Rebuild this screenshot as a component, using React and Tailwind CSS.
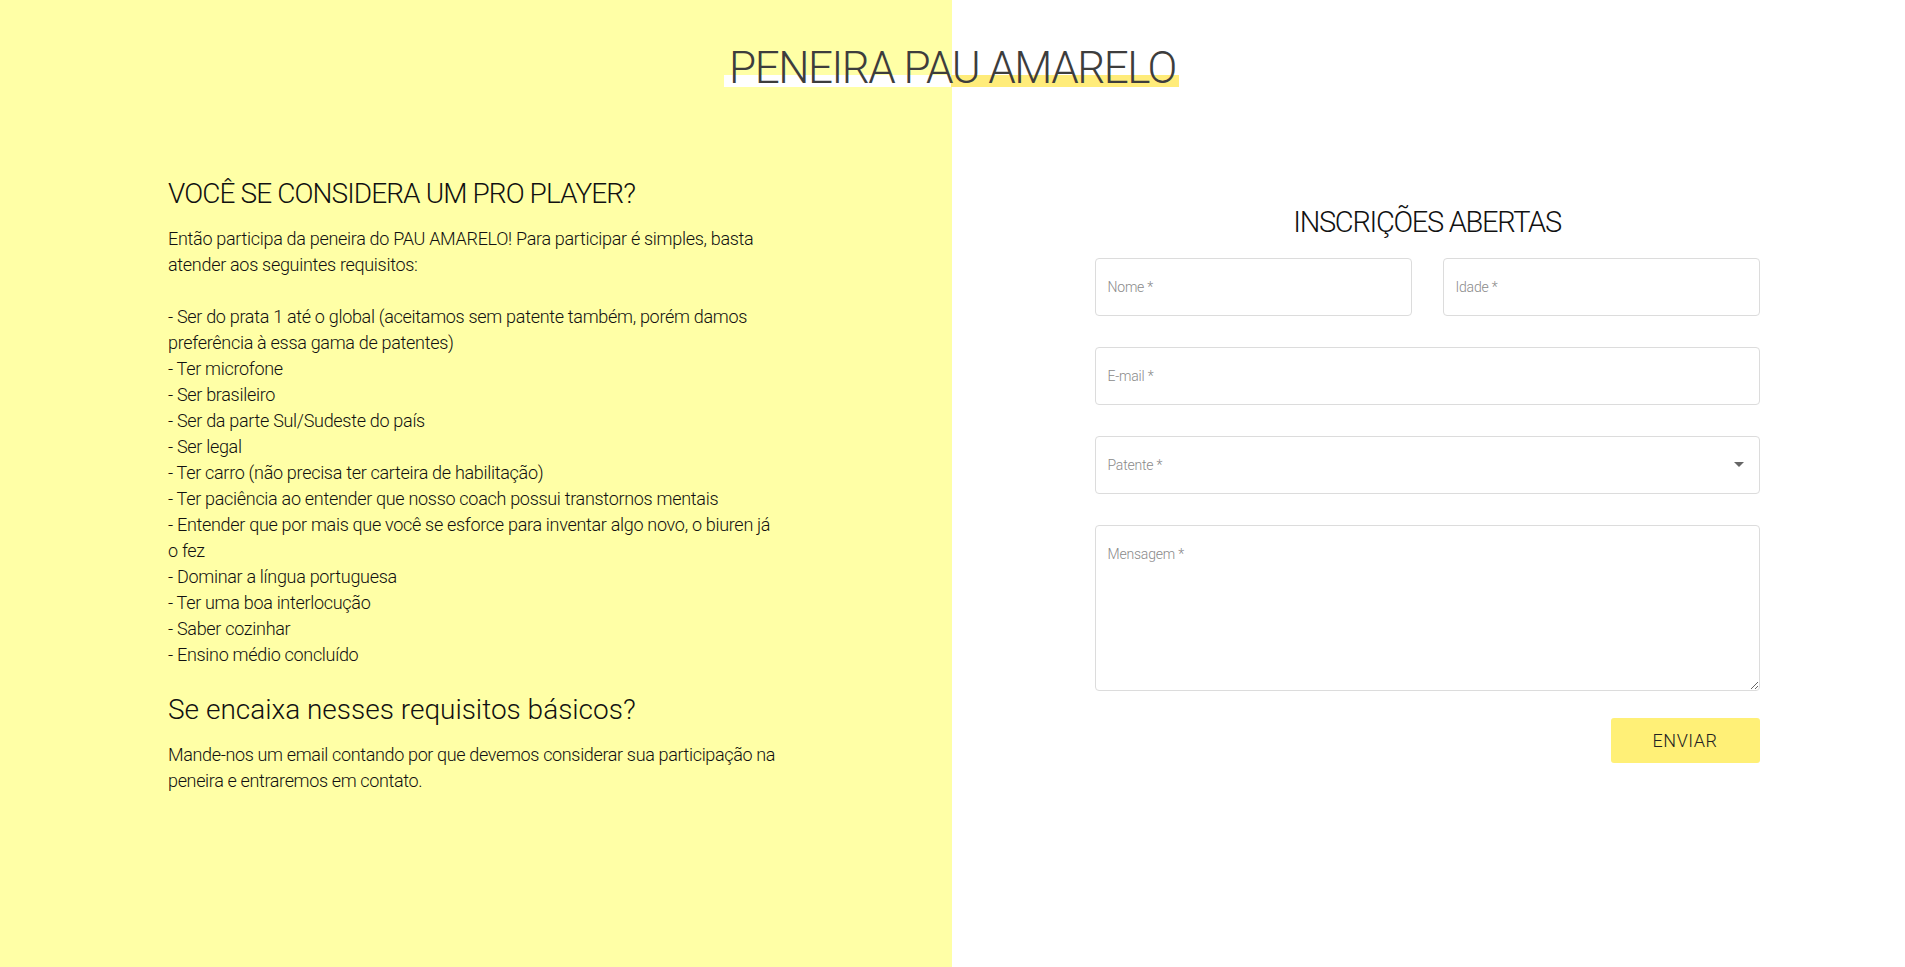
const requisitos = [
  '- Ser do prata 1 até o global (aceitamos sem patente também, porém damos preferência à essa gama de patentes)',
  '- Ter microfone',
  '- Ser brasileiro',
  '- Ser da parte Sul/Sudeste do país',
  '- Ser legal',
  '- Ter carro (não precisa ter carteira de habilitação)',
  '- Ter paciência ao entender que nosso coach possui transtornos mentais',
  '- Entender que por mais que você se esforce para inventar algo novo, o biuren já o fez',
  '- Dominar a língua portuguesa',
  '- Ter uma boa interlocução',
  '- Saber cozinhar',
  '- Ensino médio concluído',
]

const font = { fontFamily: 'Roboto, "Liberation Sans", sans-serif' }

function Field({ placeholder, className = '' }) {
  return (
    <input
      className={`h-[58px] w-full rounded-[4px] border border-[#dcdcdc] bg-white px-[12px] text-[14px] font-light tracking-[-0.2px] text-[#333] outline-none placeholder:text-[#8a8a8a] ${className}`}
      placeholder={placeholder}
      style={font}
      type="text"
    />
  )
}

export default function App() {
  return (
    <div
      className="min-h-screen bg-[linear-gradient(to_right,#ffffa6_50%,#ffffff_50%)] text-[#111]"
      style={font}
    >
      <header className="flex justify-center pt-[40px]">
        <h1 className="relative text-[44px] font-light leading-[56px] tracking-[-1.5px] text-[#3d3d3d]">
          <span className="absolute bottom-[9px] left-[-5px] right-[-3px] h-[12px] bg-[linear-gradient(to_right,#ffffff_50%,#ffec7a_50%)]" />
          <span className="relative">PENEIRA PAU AMARELO</span>
        </h1>
      </header>

      <main className="grid grid-cols-2 pb-[60px]">
        <section className="pl-[168px] pt-[80px]">
          <div className="w-[611px]">
            <h2 className="text-[28px] font-light leading-[36px] tracking-[-0.9px]">VOCÊ SE CONSIDERA UM PRO PLAYER?</h2>
            <div className="mt-[14px] text-[18px] font-light leading-[26px] tracking-[-0.3px]">
              <p>
                Então participa da peneira do PAU AMARELO! Para participar é simples, basta atender aos seguintes
                requisitos:
              </p>
              <div className="mt-[26px]">
                {requisitos.map((item) => (
                  <div key={item}>{item}</div>
                ))}
              </div>
            </div>
            <h2 className="mt-[22px] text-[28px] font-light leading-[40px] tracking-[0px]">
              Se encaixa nesses requisitos básicos?
            </h2>
            <p className="mt-[12px] text-[18px] font-light leading-[26px] tracking-[-0.35px]">
              Mande-nos um email contando por que devemos considerar sua participação na peneira e entraremos em
              contato.
            </p>
          </div>
        </section>

        <section className="pl-[142px] pt-[106px]">
          <form className="w-[665px]" onSubmit={(event) => event.preventDefault()}>
            <h2 className="text-center text-[29px] font-light leading-[40px] tracking-[-1.3px]">INSCRIÇÕES ABERTAS</h2>
            <div className="mt-[16px] grid grid-cols-2 gap-x-[31px]">
              <Field placeholder="Nome *" />
              <Field placeholder="Idade *" />
            </div>
            <Field className="mt-[31px]" placeholder="E-mail *" />
            <div className="relative mt-[31px]">
              <select
                className="h-[58px] w-full appearance-none rounded-[4px] border border-[#dcdcdc] bg-white px-[12px] text-[14px] font-light tracking-[-0.2px] text-[#8a8a8a] outline-none"
                defaultValue=""
                style={font}
              >
                <option disabled value="">
                  Patente *
                </option>
              </select>
              <span className="pointer-events-none absolute right-[16px] top-[26px] h-0 w-0 border-x-[5px] border-t-[5px] border-x-transparent border-t-[#666]" />
            </div>
            <textarea
              className="mt-[31px] block h-[166px] w-full rounded-[4px] border border-[#dcdcdc] bg-white px-[12px] pt-[18px] text-[14px] font-light tracking-[-0.2px] text-[#333] outline-none placeholder:text-[#8a8a8a]"
              placeholder="Mensagem *"
              style={font}
            />
            <div className="mt-[27px] flex justify-end">
              <button
                className="h-[45px] w-[149px] rounded-[3px] bg-[#fff077] text-[18px] font-light tracking-[0.5px] text-[#222]"
                style={font}
                type="submit"
              >
                ENVIAR
              </button>
            </div>
          </form>
        </section>
      </main>
    </div>
  )
}
